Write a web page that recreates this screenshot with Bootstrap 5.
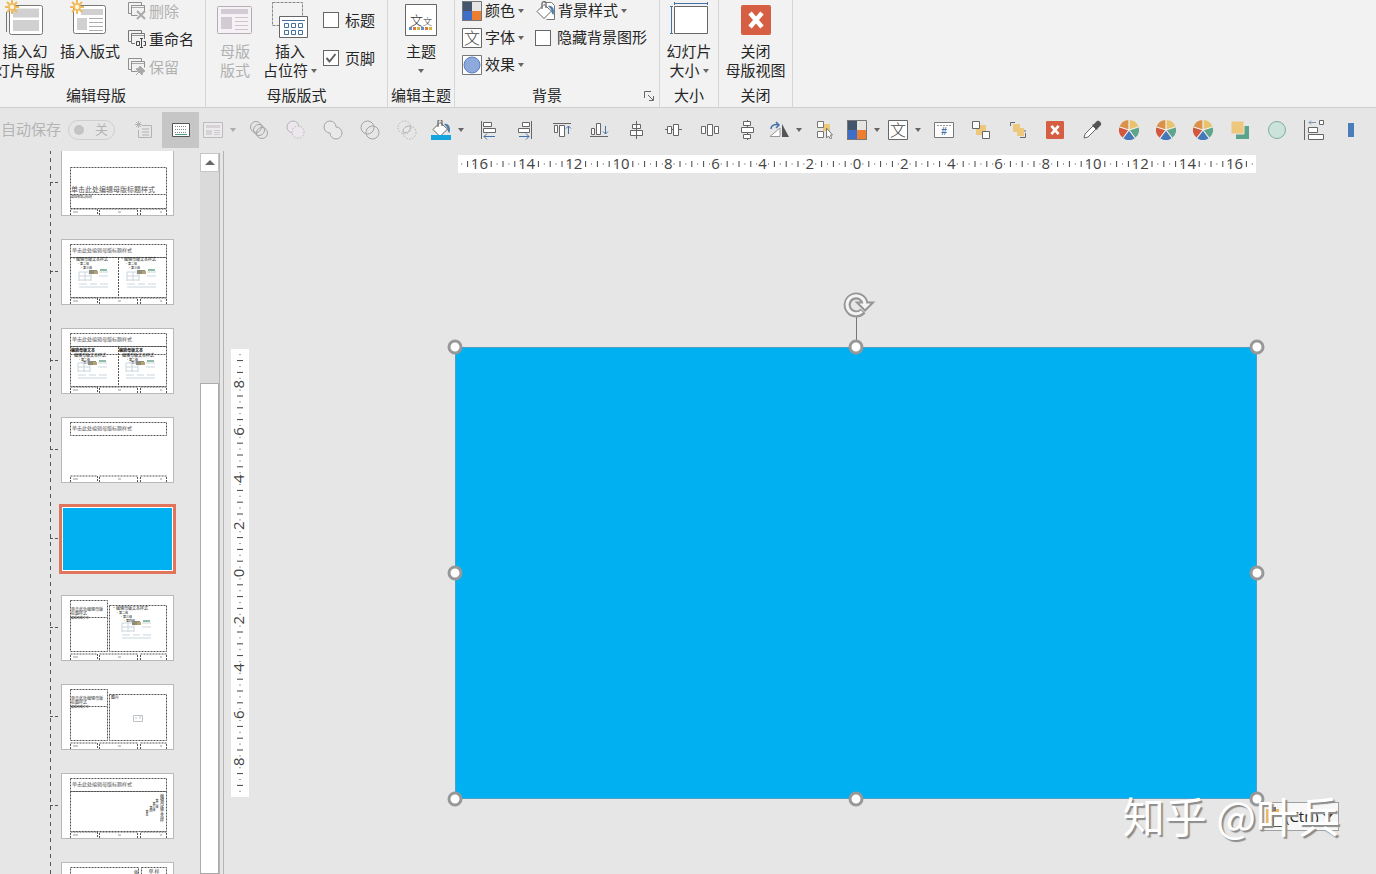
<!DOCTYPE html>
<html lang="zh-CN">
<head>
<meta charset="utf-8">
<meta name="viewport" content="width=device-width, initial-scale=1">
<title>幻灯片母版</title>
<link href="https://cdn.jsdelivr.net/npm/bootstrap@5.3.0/dist/css/bootstrap.min.css" rel="stylesheet">
<style>
  body { font-family: "Liberation Sans", "Noto Sans CJK SC", sans-serif; font-size: 15px; line-height: 19px; color: #262626; background: #e6e6e6; }
  svg { flex: none; display: block; }
  button, .ck { color: inherit; white-space: nowrap; }
  button { background: none; border: 0; padding: 0; }
  button:disabled { color: #b1b1b1; }

  /* ribbon */
  .ribbon { background: #f2f2f2; border-bottom: 1px solid #cfcfcf; margin-left: -13px; height: 108px; }
  .rgroup { position: relative; display: flex; flex-direction: column; border-right: 1px solid #d6d6d6; }
  .rgroup > .tools { height: 86px; }
  .rgroup > .caption { height: 20px; text-align: center; }
  .big { width: 60px; text-align: center; align-self: flex-start; }
  .big svg { margin: 0 auto; }
  .big .pic { height: 42px; }
  .rows { margin-top: -3px; }
  .rows > * { height: 27px; display: flex; align-items: center; gap: 3px; }
  .rows.tall > * { height: 28px; }
  .w-a { width: 219px; } .w-b { width: 182px; } .w-c { width: 67px; } .w-d { width: 205px; } .w-e { width: 59px; } .w-f { width: 74px; }
  .caret { display: inline-block; border: 3px solid transparent; border-top: 4px solid #666; border-bottom: 0; vertical-align: 3px; margin-left: 3px; }
  .ck { display: flex; align-items: center; gap: 6px; }
  .ck input { appearance: none; width: 16px; height: 16px; margin: 0; border: 1px solid #666; background: #fff; flex: none; }
  .ck input:checked { background: #fff url("data:image/svg+xml,%3Csvg xmlns='http://www.w3.org/2000/svg' viewBox='0 0 14 14'%3E%3Cpath d='M2.500 7l3 3.500L11.500 3' fill='none' stroke='%23606060' stroke-width='2'/%3E%3C/svg%3E"); }

  /* quick access bar */
  .quick { height: 43px; background: #e6e6e6; }
  .quick button { width: 37px; height: 36px; display: flex; align-items: center; justify-content: center; flex: none; }
  .quick button.dd { width: 41px; }
  .quick button.dd.wide { width: 44px; }
  .quick .dd .caret { margin-left: 7px; }
  .quick .on { background: #c6c6c6; }
  .quick button:disabled svg, .quick button:disabled .caret { opacity: .45; }
  .autosave { color: #b4b4b4; width: 125px; padding-left: 1px; gap: 7px; }
  .pill { width: 47px; height: 20px; border: 1px solid #cfcfcf; border-radius: 10px; padding: 0 6px 0 5px; font-size: 13px; }
  .pill input { appearance: none; width: 10px; height: 10px; border-radius: 50%; background: #c4c4c4; margin: 0; }

  /* slide list */
  .side { width: 224px; border-right: 1px solid #b4b4b4; }
  .slides { position: relative; margin: -1px 0 0 50px; width: 150px; }
  .slides ol { list-style: none; margin: 0; padding: 0; background: repeating-linear-gradient(#555 0 4px, transparent 4px 8px) 0 0 / 1px 100% no-repeat; }
  .slides li { height: 89px; display: flex; align-items: flex-start; }
  .slides li::before { content: ""; width: 8px; margin: 32px 3px 0 0; border-top: 1px dashed #555; }
  .thumb { width: 113px; height: 66px; border: 1px solid #b9b9b9; background: #fff; }
  .thumb.blue { background: #00b0f0; border: 2px solid #fff; outline: 3px solid #e0755c; outline-offset: -1px; }
  .thumb text { font-family: "Noto Sans CJK SC", sans-serif; }
  .bar { width: 20px; border-right: 1px solid #b4b4b4; background: #dadada; margin-top: 2px; }
  .bar .up { height: 19px; background: #fff; border: 1px solid #c6c6c6; display: flex; align-items: center; justify-content: center; }
  .bar .up::after { content: ""; border: 5px solid transparent; border-bottom-color: #666; border-top: 0; }
  .bar .grip { margin-top: 211px; background: #fff; border: 1px solid #ababab; }

  /* stage */
  .stage { display: grid; grid-template-columns: 18px 1fr; column-gap: 206px; row-gap: 174px; padding: 4px 119px 0 7px; align-content: start; }
  .hr-top { grid-column: 2; background: #fff; margin: 0 1px 0 3px; }
  .hr-top svg, .vr-left svg { width: 100%; height: 100%; }
  .vr-left { background: #fff; margin: 2px 0; min-height: 0; position: relative; }
  .vr-left svg { position: absolute; inset: 0; }
  .stage text { font: 15px "Open Sans", sans-serif; text-anchor: middle; fill: #444; }
  .slide-big { position: relative; aspect-ratio: 802 / 452; background: #00b0f0; box-shadow: inset 0 0 0 1px #4f9fc8; }
  .knob { position: absolute; width: 15px; height: 15px; border: 3px solid #989898; border-radius: 50%; background: #fff; transform: translate(-50%, -50%); }
  .turn { position: absolute; left: 50%; bottom: 100%; margin-left: -14px; }
  .paste { position: absolute; left: 100%; top: 100%; margin: 3px 0 0 3px; width: 79px; height: 29px; background: #f7f7f7; border: 1px solid #a0a0a0; display: flex; align-items: center; padding-left: 4px; font-family: "Open Sans", sans-serif; }
  .paste .caret { border-width: 5px; border-top: 6px solid #333; border-bottom: 0; margin-left: 4px; }
  .sign { position: absolute; right: -83px; top: 100%; margin-top: -14px; font-size: 42px; line-height: 60px; color: #fff; text-shadow: 2px 2px 1px #8c8c8c; white-space: nowrap; font-family: "Noto Sans CJK SC", sans-serif; }
</style>
</head>
<body class="d-flex flex-column vh-100 overflow-hidden">

<svg width="0" height="0" class="position-absolute" aria-hidden="true">
  <defs>
    <g id="spark" stroke="#f0b95a" stroke-width="2"><path d="M7 0v14M0 7h14M2 2l10 10M12 2L2 12"/><circle cx="7" cy="7" r="3" fill="#fff3d8" stroke-width="1.500"/></g>
    <g id="foot" fill="none" stroke="#555" stroke-dasharray="2 1"><path d="M8.500 64v-6h27v6M37.500 64v-6h38v6M78.500 64v-6h26v6"/><path d="M11 61h5M56 61h3M98 61h2" stroke="#999" stroke-dasharray="none"/></g>
    <g id="ttl"><rect x="8.500" y="4.500" width="96" height="13" fill="none" stroke="#555" stroke-dasharray="2 1"/><text x="10" y="12" font-size="5" fill="#555">单击此处编辑母版标题样式</text></g>
    <g id="media"><path d="M0 5h12M0 9h12M0 13h12M0 5v9M6 5v9M12 5v9M20 5h9M20 9h9M0 17h8M11 17h7M21 17h8M0 20h29" stroke="#c9d6dc" stroke-width="1" fill="none"/><path d="M10 3h8v4h-8z" fill="#8d8d7c"/><path d="M15 4h4v3h-4z" fill="#b7a46c"/><path d="M21 3h7" stroke="#8fbba7" stroke-width="2"/></g>
    <g id="lay"><path d="M.5 2.500h19v15H.5z" fill="#f6f1f6" stroke="#888"/><path d="M3 5h14v3H3zM3 10h6v5H3z" fill="#c4bcc4"/><path d="M11 10.500h6M11 12.500h6M11 14.500h6" stroke="#aaa"/></g>
    <g id="sq4"><path d="M0 0h10v10H0z" fill="#44546a"/><path d="M10 0h10v10H10z" fill="#e7e4e4"/><path d="M0 10h10v10H0z" fill="#3e6fc8"/><path d="M10 10h10v10H10z" fill="#ed7d31"/><path d="M.5.5h19v19H.5z" fill="none" stroke="#777"/></g>
    <g id="wen"><path d="M.5.5h19v19H.5z" fill="#fff" stroke="#666"/><text x="10" y="16" font-size="16" font-weight="300" text-anchor="middle" fill="#444" font-family="Noto Sans CJK SC, sans-serif">文</text></g>
    <g id="rn"><path d="M3.500 11.500h-3v-11h13v3M3.500 3.500h13v6M3.500 3.500v10h6" fill="none" stroke="#777"/><path d="M4 5.500h12" stroke="#999"/></g>
    <g id="pie"><path d="M10 10V0A10 10 0 0 1 19.500 7z" fill="#e8c36d"/><path d="M10 10l9.500-3A10 10 0 0 1 16 18z" fill="#5fa58c"/><path d="M10 10l6 8a10 10 0 0 1-12 0z" fill="#4578b8"/><path d="M10 10l-6 8A10 10 0 0 1 .5 7z" fill="#d2573d"/><path d="M10 10L.5 7A10 10 0 0 1 10 0z" fill="#dc914a"/><path d="M10 10V0M10 10l9.500-3M10 10l6 8M10 10l-6 8M10 10L.5 7" stroke="#f0f0f0" stroke-width="1.200"/></g>
    <g id="cross"><rect width="30" height="30" rx="2" fill="#d65f43"/><path d="M9 8l12 14M21 8L9 22" stroke="#fff" stroke-width="4.500"/></g>
    <g id="bucket"><path d="M9 3.500L2 10.500l7 7 7.500-7.500z" fill="#fff" stroke="#666"/><path d="M7 8V2.500C7 0 11 0 11 2.500V7" fill="none" stroke="#666" stroke-width="1.200"/><path d="M13 5c5-1 7 4 5.500 9-2-1-2-4-2.500-6z" fill="#4b7bab"/></g>
  </defs>
</svg>

<header class="ribbon d-flex flex-shrink-0">
  <section class="rgroup w-a">
    <div class="tools d-flex" style="padding-left:8px">
      <button class="big d-block"><span class="pic d-block"><svg width="44" height="36" fill="none"><path d="M3.500 12v20" stroke="#777"/><rect x="6.500" y="5.500" width="33" height="29" rx="2" fill="#fff" stroke="#777"/><path d="M10 8.500h26v9H10zM10 20h26v11H10z" fill="#d0d0d0"/><use href="#spark" x="2"/></svg></span>插入幻<br>灯片母版</button>
      <button class="big d-block" style="margin-left:5px"><span class="pic d-block"><svg width="44" height="36" fill="none"><rect x="5.500" y="5.500" width="32" height="28" rx="2" fill="#fff" stroke="#777"/><path d="M13 9h22v6H13zM9 18h10v12H9z" fill="#d0d0d0"/><path d="M21 18.500h14M21 22.500h14M21 26.500h14M21 30.500h14" stroke="#b0b0b0"/><use href="#spark" x="2"/></svg></span>插入版式</button>
      <div class="rows tall ms-2">
        <button disabled><svg width="18" height="18" opacity=".8"><use href="#rn"/><path d="M9 9l8 8M17 9l-8 8" stroke="#999" stroke-width="2"/></svg>删除</button>
        <button><svg width="18" height="18"><use href="#rn"/><path d="M7 9h11v9H7z" fill="#f2f2f2"/><path d="M8.500 11.500h3v4h-3zM15.500 11.500h2v4h-2M12 8.500h3M12 17.500h3M13.500 9v9" stroke="#444" fill="none"/></svg>重命名</button>
        <button disabled><svg width="18" height="18" opacity=".8"><use href="#rn"/><path d="M12 8l5 5-2 1-1 3-6-6 3-1zM8 17l3-3" fill="#999" stroke="#999"/></svg>保留</button>
      </div>
    </div>
    <div class="caption">编辑母版</div>
  </section>

  <section class="rgroup w-b">
    <div class="tools d-flex" style="padding-left:10px">
      <button class="big d-block" style="width:38px" disabled><span class="pic d-block"><svg width="36" height="36"><rect x=".5" y="6.500" width="34" height="27" rx="1" fill="#f5f1f5" stroke="#b5adb5"/><path d="M4 9h27v5H4zM4 17h11v12H4z" fill="#d3cbd3"/><path d="M18 17.500h13M18 21.500h13M18 25.500h13M18 29.500h13" stroke="#cdc5cd"/></svg></span>母版<br>版式</button>
      <button class="big d-block" style="margin-left:6px"><span class="pic d-block"><svg width="36" height="40" fill="none"><path d="M.5 2.500h30v23H.5z" stroke="#888" stroke-dasharray="3 1"/><path d="M7.500 16.500h28v21h-28z" fill="#fff" stroke="#666"/><path d="M10 20.500h23M12.500 23.500h4v4h-4zM19.500 23.500h4v4h-4zM26.500 23.500h4v4h-4zM12.500 30.500h4v4h-4zM19.500 30.500h4v4h-4zM26.500 30.500h4v4h-4z" stroke="#41719c"/></svg></span>插入<br>占位符<span class="caret"></span></button>
      <div style="padding:1px 0 0 3px">
        <label class="ck" style="height:38px"><input type="checkbox">标题</label>
        <label class="ck" style="height:38px"><input type="checkbox" checked>页脚</label>
      </div>
    </div>
    <div class="caption">母版版式</div>
  </section>

  <section class="rgroup w-c">
    <div class="tools d-flex justify-content-center">
      <button class="big d-block"><span class="pic d-block"><svg width="32" height="36"><path d="M.5 4.500h31v31H.5z" fill="#fff" stroke="#666"/><g font-family="Noto Sans CJK SC, sans-serif" font-weight="300" fill="#333"><text x="5" y="25" font-size="13">文</text><text x="18" y="25" font-size="9">文</text></g><path d="M4 28.500h24" stroke="#5b8fd0" stroke-width="3" stroke-dasharray="3 9"/><path d="M8 28.500h20" stroke="#dd7a3c" stroke-width="3" stroke-dasharray="3 9"/><path d="M12 28.500h16" stroke="#d6b43d" stroke-width="3" stroke-dasharray="3 9"/></svg></span>主题<br><span class="caret m-0"></span></button>
    </div>
    <div class="caption">编辑主题</div>
  </section>

  <section class="rgroup w-d">
    <div class="tools d-flex" style="padding-left:7px">
      <div class="rows">
        <button><svg width="20" height="20"><use href="#sq4"/></svg>颜色<span class="caret m-0"></span></button>
        <button><svg width="20" height="20"><use href="#wen"/></svg>字体<span class="caret m-0"></span></button>
        <button><svg width="20" height="20"><path d="M.5.5h19v19H.5z" fill="#fff" stroke="#777"/><circle cx="10" cy="10" r="8" fill="#8ea9db" stroke="#5b7fc0"/></svg>效果<span class="caret m-0"></span></button>
      </div>
      <div class="rows" style="margin-left:11px">
        <button><svg width="20" height="20"><path d="M9.500 1.500h7l3 3v14h-8" fill="#fff" stroke="#777"/><use href="#bucket"/></svg>背景样式<span class="caret m-0"></span></button>
        <label class="ck" style="gap:6px"><input type="checkbox">隐藏背景图形</label>
      </div>
    </div>
    <div class="caption d-flex"><span class="flex-grow-1">背景</span><button style="width:20px" aria-label="背景设置"><svg width="10" height="10" class="mx-auto" fill="none" stroke="#666"><path d="M.5 7V.5H7M4 4l5 5M9.500 5v4.500H5"/></svg></button></div>
  </section>

  <section class="rgroup w-e">
    <div class="tools d-flex justify-content-center">
      <button class="big d-block"><span class="pic d-block"><svg width="38" height="36" fill="none"><path d="M4.500 6.500h33v27h-33z" fill="#fff" stroke="#666"/><path d="M1.500 6v28M0 6.500h3M0 33.500h3M4 3.500h34M4.500 2v3M37.500 2v3" stroke="#4472a8"/></svg></span>幻灯片<br>大小<span class="caret"></span></button>
    </div>
    <div class="caption">大小</div>
  </section>

  <section class="rgroup w-f">
    <div class="tools d-flex justify-content-center">
      <button class="big d-block"><span class="pic d-block"><svg width="30" height="35"><use href="#cross" y="5"/></svg></span>关闭<br>母版视图</button>
    </div>
    <div class="caption">关闭</div>
  </section>
</header>

<nav class="quick d-flex align-items-center flex-shrink-0" aria-label="快速访问工具栏">
  <label class="autosave d-flex align-items-center">自动保存<span class="pill d-flex align-items-center justify-content-between"><input type="checkbox" disabled>关</span></label>
  <button disabled aria-label="新建幻灯片"><svg width="20" height="20" fill="none" stroke="#777"><path d="M8 5.500h9.500v12h-13V10M8 9h7M8 12h7M8 15h7M2 2l5 5M7 2L2 7M4.500 1v7M1 4.500h7"/></svg></button>
  <button class="on" aria-label="普通视图"><svg width="20" height="20" fill="none"><path d="M1.500 3.500h17v13h-17z" fill="#fff" stroke="#555"/><path d="M4 6.500h12M4 9.500h12M4 12.500h12" stroke="#888" stroke-dasharray="1 1"/><path d="M4 14.500h12" stroke="#4f9b85"/></svg></button>
  <button class="dd" disabled aria-label="版式"><svg width="20" height="20"><use href="#lay"/></svg><span class="caret"></span></button>
  <button disabled aria-label="拆分"><svg width="20" height="20" fill="none" stroke="#555"><circle cx="7" cy="7" r="5.500"/><circle cx="10" cy="10" r="5.500"/><circle cx="13" cy="13" r="5.500"/></svg></button>
  <button disabled aria-label="剪除"><svg width="20" height="20" fill="#f4eaf4" stroke="#777"><circle cx="7" cy="7" r="6"/><circle cx="12" cy="12" r="6" stroke-dasharray="1.500 1.500"/></svg></button>
  <button disabled aria-label="结合"><svg width="20" height="20" fill="#eee" stroke="#555"><path d="M13 7A6 6 0 1 1 7 13A6 6 0 1 1 13 7z"/></svg></button>
  <button disabled aria-label="组合"><svg width="20" height="20" fill="none" stroke="#555"><circle cx="7.500" cy="7.500" r="6.500"/><circle cx="12.500" cy="12.500" r="6.500"/></svg></button>
  <button disabled aria-label="相交"><svg width="20" height="20" fill="none" stroke="#777"><g stroke-dasharray="1.500 1.500"><circle cx="7.500" cy="7.500" r="6.500"/><circle cx="12.500" cy="12.500" r="6.500"/></g><path d="M6 12c0-4 3-6 7-6 1 4-2 8-7 6z" fill="#f4eaf4"/></svg></button>
  <button class="dd wide" aria-label="填充颜色"><svg width="20" height="20"><use href="#bucket" y="-1"/><path d="M0 15h20v5H0z" fill="#12a5e0"/></svg><span class="caret"></span></button>
  <button aria-label="左对齐"><svg width="20" height="20" fill="#fff" stroke="#666"><path d="M3.500 1v18M5.500 2.500h8v4h-8zM5.500 8.500h12v4h-12z"/><path d="M17 16.500H6M9 13.500l-3 3 3 3" fill="none" stroke="#4472a8"/></svg></button>
  <button aria-label="右对齐"><svg width="20" height="20" fill="#fff" stroke="#666"><path d="M16.500 1v18M7.500 2.500h7v4h-7zM3.500 8.500h11v4h-11z"/><path d="M4 16.500h10M11 13.500l3 3-3 3" fill="none" stroke="#4472a8"/></svg></button>
  <button aria-label="顶端对齐"><svg width="20" height="20" fill="#fff" stroke="#666"><path d="M1 3.500h18M2.500 5.500h3v7h-3zM7.500 5.500h5v11h-5z"/><path d="M16.500 14V6M14 8.500L16.500 6 19 8.500" fill="none" stroke="#4472a8"/></svg></button>
  <button aria-label="底端对齐"><svg width="20" height="20" fill="#fff" stroke="#666"><path d="M1 16.500h18M2.500 8.500h3v6h-3zM7.500 3.500h4v11h-4z"/><path d="M16.500 6v8M14 11.500l2.500 2.500 2.500-2.500" fill="none" stroke="#4472a8"/></svg></button>
  <button aria-label="水平居中"><svg width="20" height="20" fill="#fff" stroke="#666"><path d="M10.500 1v18M6.500 4.500h8v4h-8zM4.500 10.500h12v5h-12z"/></svg></button>
  <button aria-label="垂直居中"><svg width="20" height="20" fill="#fff" stroke="#666"><path d="M2 9.500h17"/><path d="M4.500 6.500h4v7h-4zM10.500 4.500h5v11h-5z"/></svg></button>
  <button aria-label="横向分布"><svg width="20" height="20" fill="#fff" stroke="#666"><path d="M1.500 6.500h4v7h-4zM7.500 4.500h5v11h-5zM14.500 6.500h4v7h-4z"/></svg></button>
  <button aria-label="纵向分布"><svg width="20" height="20" fill="#fff" stroke="#666"><path d="M10.500 0v20"/><path d="M6.500 1.500h7v4h-7zM4.500 7.500h12v5h-12zM6.500 14.500h7v4h-7z"/></svg></button>
  <button class="dd" aria-label="旋转"><svg width="20" height="20"><path d="M1 16.500h10V8z" fill="#fff" stroke="#999"/><path d="M13 4v13h7z" fill="#555"/><path d="M2 9c0-4 4-5 8-4M7 2l3 3-3 3" fill="none" stroke="#4472a8" stroke-width="1.500"/></svg><span class="caret"></span></button>
  <button aria-label="选择"><svg width="20" height="20" stroke="#777"><path d="M8 4h7v7H8z" fill="#edc87c" stroke="none"/><path d="M2.500 1.500h6v6h-6zM2.500 11.500h6v6h-6z" fill="#fff"/><path d="M11.500 8v10l2-2 2 3 1-1-1-3h2z" fill="#fff"/></svg></button>
  <button class="dd" aria-label="主题颜色"><svg width="20" height="20"><use href="#sq4"/></svg><span class="caret"></span></button>
  <button class="dd" aria-label="主题字体"><svg width="20" height="20"><use href="#wen"/></svg><span class="caret"></span></button>
  <button aria-label="编号"><svg width="20" height="20"><path d="M.5 2.500h19v15H.5z" fill="#fff" stroke="#777"/><path d="M3 5.500h14" stroke="#999" stroke-dasharray="2 1"/><text x="10" y="15" font-size="10" font-weight="bold" text-anchor="middle" fill="#4472a8">#</text></svg></button>
  <button aria-label="组合形状"><svg width="20" height="20"><path d="M5 5h10v10H5z" fill="#edc87c"/><path d="M1.500 1.500h7v7h-7zM11.500 11.500h7v7h-7z" fill="#fff" stroke="#666"/></svg></button>
  <button aria-label="取消组合"><svg width="20" height="20"><path d="M5 4h7v4h4v8H9v-4H5z" fill="#edc87c"/><path d="M2.500 6V2.500H7M17.500 13v4.500H12M17 10v2" fill="none" stroke="#666"/></svg></button>
  <button aria-label="关闭母版"><svg width="18" height="18" viewBox="0 0 30 30"><use href="#cross"/></svg></button>
  <button aria-label="取色器"><svg width="20" height="20"><path d="M2 18l1-4 8-8 3 3-8 8z" fill="#fff" stroke="#666"/><path d="M10 5l5 5 1-2 3-3c1-2-2-5-4-4l-3 3z" fill="#555"/></svg></button>
  <button aria-label="填充"><svg width="20" height="20"><use href="#pie"/></svg></button>
  <button aria-label="轮廓"><svg width="20" height="20"><use href="#pie"/></svg></button>
  <button aria-label="文本颜色"><svg width="20" height="20"><use href="#pie"/></svg></button>
  <button aria-label="上移一层"><svg width="20" height="20"><path d="M6 6h13v13H6z" fill="#5ba38a"/><path d="M1 1h13v13H1z" fill="#edc87c" stroke="#e6e6e6"/></svg></button>
  <button aria-label="形状"><svg width="20" height="20"><circle cx="10" cy="10" r="8.500" fill="#cbe3da" stroke="#7cb09e"/></svg></button>
  <button aria-label="对齐"><svg width="22" height="20" fill="#fff" stroke="#666"><path d="M1.500 0v20M16.500.5h4v4h-4zM5.500 7.500h9v5h-9zM5.500 14.500h15v5h-15z"/><path d="M13 2.500H6M8 .5l-2 2 2 2" fill="none" stroke="#7c93b0"/></svg></button>
  <button aria-label="更多"><svg width="6" height="14"><path d="M0 0h6v14H0z" fill="#4a7ebb"/></svg></button>
</nav>

<main class="d-flex flex-grow-1 overflow-hidden">
  <aside class="side d-flex flex-shrink-0 overflow-hidden">
    <div class="slides">
      <ol>
        <li><svg class="thumb" viewBox="0 0 111 64"><g fill="none" stroke="#555" stroke-dasharray="2 1"><path d="M8.500 16.500h96v41h-96zM8.500 43.500h96"/></g><text x="9" y="41" font-size="7" fill="#555">单击此处编辑母版标题样式</text><text x="9" y="47" font-size="3" fill="#333">编辑母版副标题</text><use href="#foot"/></svg></li>
        <li><svg class="thumb" viewBox="0 0 111 64"><use href="#ttl"/><path d="M8.500 17.500h96v40h-96zM56.500 18v40" fill="none" stroke="#555" stroke-dasharray="2 1"/><g id="outl"><g font-size="4" fill="#222"><text x="10" y="21">·编辑母版文本样式</text><text x="15" y="25" font-size="3">·第二级</text><text x="18" y="29" font-size="3">·第三级</text></g><use href="#media" x="17" y="27"/></g><use href="#outl" x="48"/><use href="#foot"/></svg></li>
        <li><svg class="thumb" viewBox="0 0 111 64"><use href="#ttl"/><path d="M8.500 17.500h96v40h-96zM56.500 18v40M8.500 25.500h96" fill="none" stroke="#555" stroke-dasharray="2 1"/><g id="outm"><g font-size="4" fill="#111"><text x="9" y="23" font-weight="bold">编辑母版文本</text><text x="12" y="28">编辑母版文本样式</text><text x="16" y="32" font-size="3">·第二级</text><text x="18" y="35" font-size="3">·第三级</text></g><use href="#media" x="16" y="29"/></g><use href="#outm" x="48"/><use href="#foot"/></svg></li>
        <li><svg class="thumb" viewBox="0 0 111 64"><use href="#ttl"/><use href="#foot"/></svg></li>
        <li><div class="thumb blue"></div></li>
        <li><svg class="thumb" viewBox="0 0 111 64"><g id="duo"><path d="M8.500 4.500h37v51h-37zM8.500 21.500h37M47.500 9.500h57v46h-57z" fill="none" stroke="#555" stroke-dasharray="2 1"/><g font-size="4" fill="#333"><text x="9" y="15">单击此处编辑母版</text><text x="9" y="19">标题样式</text><text x="9" y="23" font-size="3">编辑母版文本</text></g><use href="#foot"/></g><g font-size="4" fill="#222"><text x="50" y="14">·编辑母版文本样式</text><text x="54" y="18" font-size="3">·第二级</text><text x="58" y="22" font-size="3">·第三级</text><text x="61" y="26" font-size="3">·第四级</text></g><use href="#media" x="60" y="22"/></svg></li>
        <li><svg class="thumb" viewBox="0 0 111 64"><use href="#duo"/><text x="49" y="14" font-size="4" fill="#222">图片</text><path d="M71.500 30.500h9v6h-9zM74 34v-2M78 34v-3" fill="none" stroke="#bcc3c8"/></svg></li>
        <li><svg class="thumb" viewBox="0 0 111 64"><use href="#ttl"/><path d="M8.500 17.500h96v40h-96z" fill="none" stroke="#555" stroke-dasharray="2 1"/><g font-size="4" fill="#222" style="writing-mode:vertical-rl"><text x="100" y="20">编辑母版文本样</text><text x="95" y="25" font-size="3">第二级</text><text x="92" y="28" font-size="3">第三级</text><text x="89" y="32" font-size="3">第四</text><text x="85" y="36" font-size="3">第五</text></g><use href="#foot"/></svg></li>
        <li><svg class="thumb" viewBox="0 0 111 64"><path d="M8.500 4.500h68v52h-68zM79.500 4.500h25v52h-25z" fill="none" stroke="#555" stroke-dasharray="2 1"/><g fill="#444" style="writing-mode:vertical-rl"><text x="95" y="6" font-size="5">样式标题</text><text x="89" y="6" font-size="5">单击此处</text><text x="74" y="7" font-size="4">编辑母版</text></g></svg></li>
      </ol>
    </div>
    <div class="bar d-flex flex-column">
      <button class="up" aria-label="向上滚动"></button>
      <div class="grip flex-grow-1"></div>
    </div>
  </aside>

  <section class="stage flex-grow-1">
    <div class="hr-top"><svg id="rulerX" viewBox="-399 -9 798 18"></svg></div>
    <div class="vr-left"><svg id="rulerY" viewBox="-9 -224 18 448"></svg></div>
    <div class="slide-big">
      <svg class="turn" width="36" height="58"><path d="M14.500 28v30" stroke="#777"/><path d="M21 22A9 9 0 1 1 23 14" fill="none" stroke="#969696" stroke-width="7"/><path d="M15 13.500h16l-8 8z" fill="#f4f4f4" stroke="#969696" stroke-width="2"/><path d="M20 22.500A9 9 0 1 1 23 15" fill="none" stroke="#f4f4f4" stroke-width="3"/></svg>
      <button class="paste" aria-label="粘贴选项"><svg width="20" height="22"><path d="M1 3h13v17H1z" fill="#e8b860"/><path d="M4 1h7v4H4z" fill="#777"/><path d="M8.500 8.500h6l3 3v9h-9z" fill="#fff" stroke="#555"/></svg>(Ctrl)<span class="caret"></span></button>
      <i class="knob" style="left:0;top:0"></i><i class="knob" style="left:50%;top:0"></i><i class="knob" style="left:100%;top:0"></i>
      <i class="knob" style="left:0;top:50%"></i><i class="knob" style="left:100%;top:50%"></i>
      <i class="knob" style="left:0;top:100%"></i><i class="knob" style="left:50%;top:100%"></i><i class="knob" style="left:100%;top:100%"></i>
      <div class="sign">知乎 @叶兵</div>
    </div>
  </section>
</main>

<script src="https://cdn.jsdelivr.net/npm/bootstrap@5.3.0/dist/js/bootstrap.bundle.min.js"></script>
<script>
  // Rulers: a figure every 2 cm, a bar every half, a dot every quarter
  const CM = 23.6;
  function ruler(id, half, upright) {
    let out = '';
    for (let q = -Math.floor(half / CM * 4); q <= half / CM * 4; q++) {
      const p = q * CM / 4;
      if (q % 8 === 0) {
        out += upright ? `<text transform="translate(4 ${p}) rotate(-90)">${Math.abs(q / 4)}</text>` : `<text x="${p}" y="5">${Math.abs(q / 4)}</text>`;
      } else {
        const r = q % 2 ? 0.5 : 3;
        out += upright ? `<path d="M${-r} ${p}H${r}" stroke="#444"/>` : `<path d="M${p} ${-r}V${r}" stroke="#444"/>`;
      }
    }
    document.getElementById(id).innerHTML = out;
  }
  ruler('rulerX', 399, false);
  ruler('rulerY', 224, true);
</script>
</body>
</html>
